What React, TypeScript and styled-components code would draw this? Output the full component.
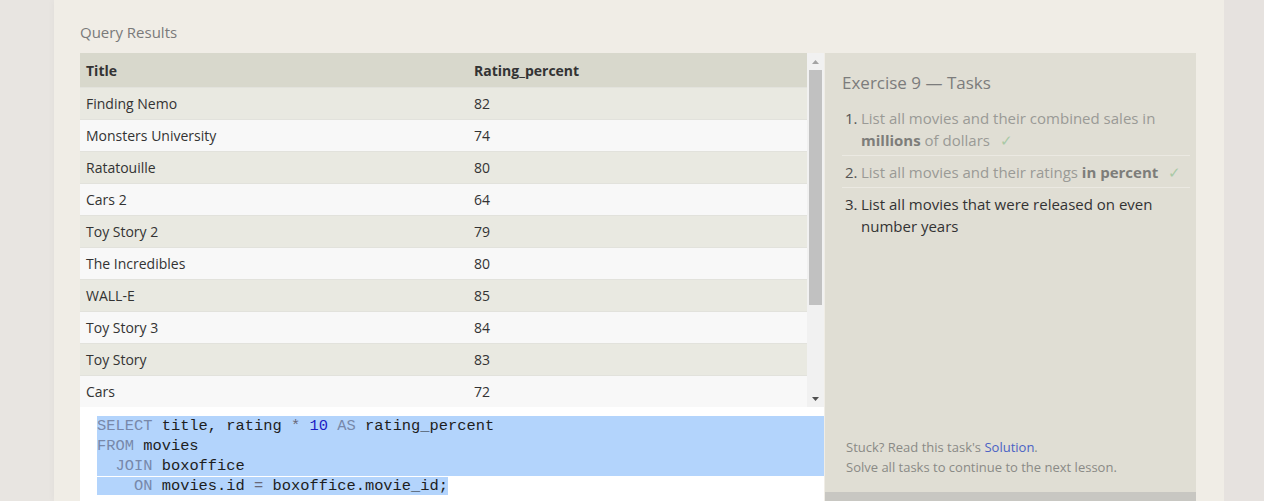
import React from "react";
import styled, { createGlobalStyle } from "styled-components";

const Global = createGlobalStyle`
  html, body { margin: 0; padding: 0; height: 501px; overflow: hidden; }
  body { background: #e8e5e1; font-family: "Open Sans", "Liberation Sans", sans-serif; }
  #root { height: 501px; }
`;

const Page = styled.div`
  display: flex;
  height: 501px;
`;

const Gutter = styled.div<{ $w: number; $bg: string }>`
  width: ${(p) => p.$w}px;
  flex: none;
  background: ${(p) => p.$bg};
`;

const Main = styled.main`
  width: 1170px;
  flex: none;
  background: #f0ede6;
  box-shadow: 0 0 8px rgba(0, 0, 0, 0.04);
  padding: 22px 28px 0 26px;
  box-sizing: border-box;
  display: flex;
  flex-direction: column;
`;

const Label = styled.div`
  font-size: 15px;
  line-height: 21px;
  color: #7a7a7a;
  margin-bottom: 10px;
`;

const Workspace = styled.div`
  display: grid;
  grid-template-columns: 745px 371px;
  flex: 1;
  min-height: 0;
`;

const LeftCol = styled.div`
  display: flex;
  flex-direction: column;
  width: 744px;
`;

const Results = styled.div`
  display: flex;
  height: 354px;
  flex: none;
  overflow: hidden;
`;

const Table = styled.div`
  width: 727px;
  flex: none;
  display: flex;
  flex-direction: column;
`;

const Row = styled.div<{ $kind: "head" | "odd" | "even" }>`
  display: grid;
  flex: none;
  grid-template-columns: 388px 1fr;
  height: ${(p) => (p.$kind === "head" ? 34 : 32)}px;
  box-sizing: border-box;
  align-items: center;
  font-size: 14px;
  color: #333;
  font-weight: ${(p) => (p.$kind === "head" ? 700 : 400)};
  background: ${(p) =>
    p.$kind === "head" ? "#d8d8cc" : p.$kind === "odd" ? "#e9e9e1" : "#f8f8f8"};
  border-top: ${(p) => (p.$kind === "head" ? "none" : "1px solid #e2e2dc")};
`;

const Cell = styled.div`
  padding-left: 6px;
  white-space: nowrap;
`;

const ScrollBar = styled.div`
  width: 17px;
  flex: none;
  display: flex;
  flex-direction: column;
  background: #f1f1f1;
`;

const ScrollBtn = styled.div`
  height: 17px;
  flex: none;
  display: flex;
  align-items: center;
  justify-content: center;
`;

const Track = styled.div`
  flex: 1;
  display: flex;
  flex-direction: column;
  align-items: center;
`;

const Thumb = styled.div`
  width: 13px;
  flex: none;
  background: #c1c1c1;
`;

const Editor = styled.div`
  flex: 1;
  background: #ffffff;
  padding: 9px 0 0 17px;
  font-family: "Liberation Mono", "DejaVu Sans Mono", monospace;
  font-size: 15.4px;
  color: #1e1e1e;
`;

const Line = styled.div<{ $full?: boolean }>`
  height: 20px;
  line-height: 20px;
  white-space: pre;
  background: ${(p) => (p.$full ? "#b3d4fc" : "transparent")};
`;

const Sel = styled.span`
  background: #b3d4fc;
`;

const Kw = styled.span`
  color: #7788aa;
`;
const Num = styled.span`
  color: #1c1cc4;
`;
const Op = styled.span`
  color: #686878;
`;

const Panel = styled.aside`
  background: #e0ded4;
  display: flex;
  flex-direction: column;
`;

const PanelBody = styled.div`
  height: 439px;
  flex: none;
  box-sizing: border-box;
  padding: 18px 6px 15px 17px;
  display: flex;
  flex-direction: column;
`;

const PanelTitle = styled.div`
  font-size: 17px;
  line-height: 24px;
  color: #7c7c7c;
  margin-bottom: 7px;
`;

const TaskList = styled.ol`
  list-style: none;
  margin: 0;
  padding: 0;
`;

const Task = styled.li<{ $done?: boolean }>`
  display: flex;
  font-size: 15px;
  line-height: 22px;
  padding: 5px 0 4px 3px;
  color: ${(p) => (p.$done ? "#9a9a96" : "#333")};
  & + & {
    border-top: 1px solid #ebe9e2;
  }
  b {
    color: ${(p) => (p.$done ? "#7d7d7a" : "#333")};
    font-weight: 700;
  }
`;

const TaskNum = styled.span<{ $done?: boolean }>`
  width: 16px;
  flex: none;
  color: ${(p) => (p.$done ? "#555" : "#333")};
`;

const TaskText = styled.span``;

const Check = styled.span`
  color: #a9c9a6;
  margin-left: 10px;
`;

const Help = styled.div`
  margin-top: auto;
  font-size: 13px;
  line-height: 20px;
  color: #8a8a86;
  padding-left: 4px;
  a {
    color: #4a62c4;
    text-decoration: none;
  }
`;

const PanelFoot = styled.div`
  height: 20px;
  flex: none;
  background: #c8c7c2;
`;

const rows: [string, number][] = [
  ["Finding Nemo", 82],
  ["Monsters University", 74],
  ["Ratatouille", 80],
  ["Cars 2", 64],
  ["Toy Story 2", 79],
  ["The Incredibles", 80],
  ["WALL-E", 85],
  ["Toy Story 3", 84],
  ["Toy Story", 83],
  ["Cars", 72],
  ["A Bug's Life", 72],
  ["Monsters, Inc.", 81],
  ["Up", 83],
  ["Brave", 72],
];

const Arrow = ({ up, color }: { up?: boolean; color: string }) => (
  <svg width="7" height="4" viewBox="0 0 7 4">
    <polygon points={up ? "0,4 7,4 3.5,0" : "0,0 7,0 3.5,4"} fill={color} />
  </svg>
);

export default function App() {
  const contentH = 34 + rows.length * 32;
  const trackH = 354 - 34;
  const thumbH = Math.round((354 / contentH) * trackH);
  return (
    <>
      <Global />
      <Page>
        <Gutter $w={54} $bg="#e8e5e1" />
        <Main>
          <Label>Query Results</Label>
          <Workspace>
            <LeftCol>
              <Results>
                <Table>
                  <Row $kind="head">
                    <Cell>Title</Cell>
                    <Cell>Rating_percent</Cell>
                  </Row>
                  {rows.map(([t, r], i) => (
                    <Row key={t} $kind={i % 2 === 0 ? "odd" : "even"}>
                      <Cell>{t}</Cell>
                      <Cell>{r}</Cell>
                    </Row>
                  ))}
                </Table>
                <ScrollBar>
                  <ScrollBtn>
                    <Arrow up color="#a3a3a3" />
                  </ScrollBtn>
                  <Track>
                    <Thumb style={{ height: thumbH }} />
                  </Track>
                  <ScrollBtn>
                    <Arrow color="#505050" />
                  </ScrollBtn>
                </ScrollBar>
              </Results>
              <Editor>
                <Line $full>
                  <Kw>SELECT</Kw> title, rating <Op>*</Op> <Num>10</Num> <Kw>AS</Kw> rating_percent
                </Line>
                <Line $full>
                  <Kw>FROM</Kw> movies
                </Line>
                <Line $full>
                  {"  "}
                  <Kw>JOIN</Kw> boxoffice
                </Line>
                <Line>
                  <Sel>
                    {"    "}
                    <Kw>ON</Kw> movies.id <Op>=</Op> boxoffice.movie_id;
                  </Sel>
                </Line>
              </Editor>
            </LeftCol>
            <Panel>
              <PanelBody>
                <PanelTitle>Exercise 9 — Tasks</PanelTitle>
                <TaskList>
                  <Task $done>
                    <TaskNum $done>1.</TaskNum>
                    <TaskText>
                      List all movies and their combined sales in <b>millions</b> of dollars
                      <Check>✓</Check>
                    </TaskText>
                  </Task>
                  <Task $done>
                    <TaskNum $done>2.</TaskNum>
                    <TaskText>
                      List all movies and their ratings <b>in percent</b>
                      <Check>✓</Check>
                    </TaskText>
                  </Task>
                  <Task>
                    <TaskNum>3.</TaskNum>
                    <TaskText>List all movies that were released on even number years</TaskText>
                  </Task>
                </TaskList>
                <Help>
                  Stuck? Read this task's <a href="#">Solution</a>.
                  <br />
                  Solve all tasks to continue to the next lesson.
                </Help>
              </PanelBody>
              <PanelFoot />
            </Panel>
          </Workspace>
        </Main>
        <Gutter $w={40} $bg="#e6e2df" />
      </Page>
    </>
  );
}
